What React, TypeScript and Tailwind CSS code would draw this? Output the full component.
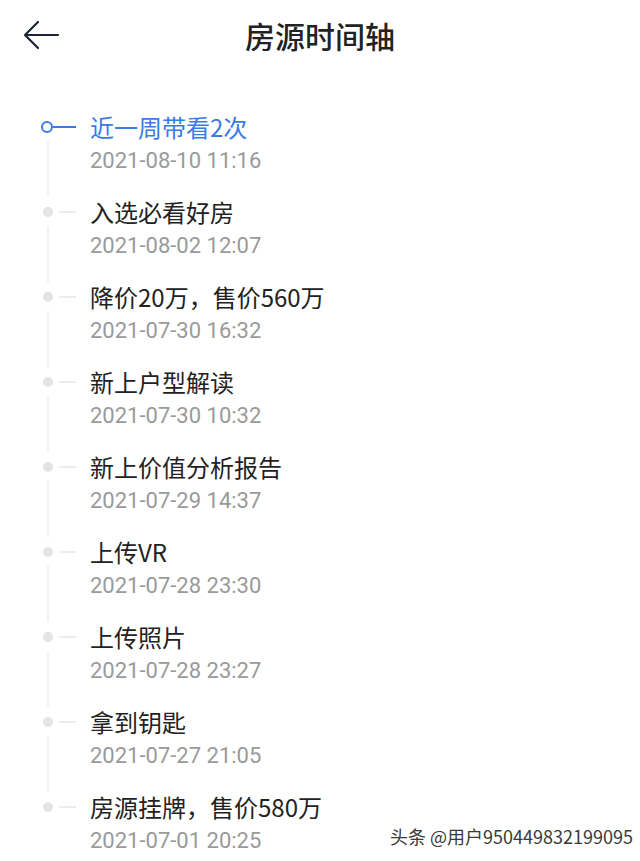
import React from 'react';

type Item = { title: string; time: string };

const items: Item[] = [
  { title: '近一周带看2次', time: '2021-08-10 11:16' },
  { title: '入选必看好房', time: '2021-08-02 12:07' },
  { title: '降价20万，售价560万', time: '2021-07-30 16:32' },
  { title: '新上户型解读', time: '2021-07-30 10:32' },
  { title: '新上价值分析报告', time: '2021-07-29 14:37' },
  { title: '上传VR', time: '2021-07-28 23:30' },
  { title: '上传照片', time: '2021-07-28 23:27' },
  { title: '拿到钥匙', time: '2021-07-27 21:05' },
  { title: '房源挂牌，售价580万', time: '2021-07-01 20:25' },
];

const font = { fontFamily: '"Noto Sans CJK SC", "Noto Sans", sans-serif' };
const numFont = { fontFamily: 'Roboto, "Noto Sans CJK SC", sans-serif' };

const App: React.FC = () => {
  return (
    <div className="relative w-[640px] h-[861px] bg-white overflow-hidden" style={font}>
      {/* --- Header --- */}
      <header className="relative h-[75px] flex items-center justify-center">
        <button className="absolute left-[23px] top-[19px] w-[40px] h-[32px] flex items-center">
          <svg width="38" height="30" viewBox="0 0 38 30" fill="none">
            <path d="M15 2 L2 15 L15 28 M2 15 H35" stroke="#1c2333" strokeWidth="2.2" strokeLinecap="round" strokeLinejoin="round" />
          </svg>
        </button>
        <h1 className="text-[30px] font-medium text-[#222] -mt-[5px]">房源时间轴</h1>
      </header>

      {/* --- Timeline --- */}
      <div className="pt-[35px]">
        {items.map((it, i) => {
          const first = i === 0;
          const last = i === items.length - 1;
          return (
            <div key={i} className="relative h-[85px]">
              {!last && <div className="absolute left-[47px] top-[31px] w-[2px] h-[56px] bg-[#f2f2f2]" />}
              <div className="flex items-center h-[34px]">
                <div className="w-[90px] flex items-center">
                  {first ? (
                    <>
                      <div className="ml-[41px] w-[12px] h-[12px] rounded-full border-[2.5px] border-[#3a7be6]" />
                      <div className="w-[23px] h-[2px] bg-[#3a7be6]" />
                    </>
                  ) : (
                    <>
                      <div className="ml-[43px] w-[10px] h-[10px] rounded-full bg-[#e4e4e4]" />
                      <div className="ml-[6px] w-[17px] h-[2px] bg-[#ececec]" />
                    </>
                  )}
                </div>
                <span className={`text-[24px] leading-none ${first ? 'text-[#3a7be6]' : 'text-[#222]'}`}>{it.title}</span>
              </div>
              <div className="pl-[90px] h-[32px] flex items-center text-[22px] text-[#9a9a9a]" style={numFont}>{it.time}</div>
            </div>
          );
        })}
      </div>

      {/* --- Watermark --- */}
      <div className="absolute left-[390px] top-[827px] text-[18px] text-[#3a3a3a] leading-none" style={{ textShadow: '0 0 2px #fff' }}>
        头条 @用户950449832199095
      </div>
    </div>
  );
};

export default App;
